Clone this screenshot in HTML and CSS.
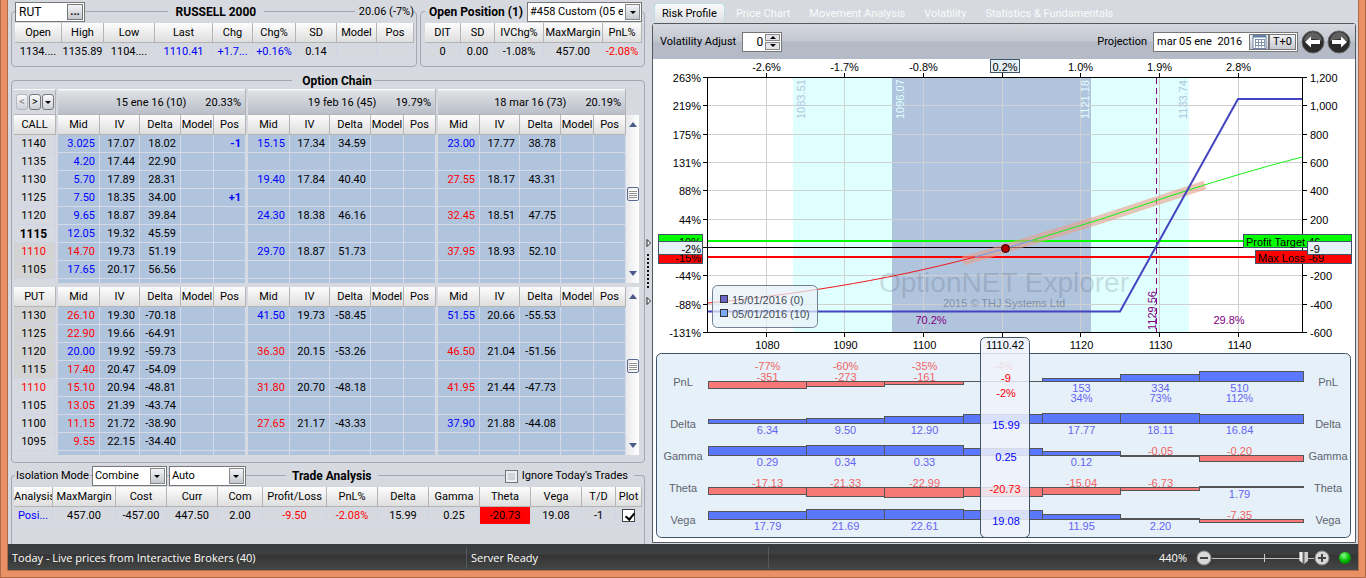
FILE: index.html
```html
<!DOCTYPE html>
<html lang="en">
<head>
<meta charset="utf-8">
<title>Option Chain and Risk Profile</title>
<link rel="stylesheet" href="styles.css">
</head>
<body>
<div class="frame">
<div class="window">
  <main class="workspace">
    <div class="left">
      <div class="top-row">
        <section class="group quote">
          <header class="group-head">
            <div class="field symbol"><input type="text" value="RUT" aria-label="Symbol"><button type="button" class="mini">...</button></div>
            <h2>RUSSELL 2000</h2>
            <span class="patch">20.06 (-7%)</span>
          </header>
          <table class="data">
            <colgroup><col class="w47"><col class="w42"><col class="w51"><col class="w58"><col class="w40"><col class="w43"><col class="w41"><col class="w40"><col class="w37"></colgroup>
            <thead><tr><th>Open</th><th>High</th><th>Low</th><th>Last</th><th>Chg</th><th>Chg%</th><th>SD</th><th>Model</th><th>Pos</th></tr></thead>
            <tbody><tr><td>1134....</td><td>1135.89</td><td>1104....</td><td class="up">1110.41</td><td class="up">+1.7...</td><td class="up">+0.16%</td><td>0.14</td><td></td><td></td></tr></tbody>
          </table>
        </section>
        <section class="group position">
          <header class="group-head">
            <h2>Open Position (1)</h2>
            <div class="combo trade"><select aria-label="Trade"><option>#458 Custom (05 e</option></select><span class="drop"></span></div>
          </header>
          <table class="data">
            <colgroup><col class="w36"><col class="w34"><col class="w49"><col class="w59"><col class="w39"></colgroup>
            <thead><tr><th>DIT</th><th>SD</th><th>IVChg%</th><th>MaxMargin</th><th>PnL%</th></tr></thead>
            <tbody><tr><td>0</td><td>0.00</td><td>-1.08%</td><td>457.00</td><td class="down">-2.08%</td></tr></tbody>
          </table>
        </section>
      </div>

      <section class="group chain">
        <header class="group-head low"><h2>Option Chain</h2></header>
        <div class="chain-part">
          <table class="data legs" id="calls">
            <thead>
              <tr class="band">
                <th class="nav"><div class="nav-buttons"><button type="button" disabled>&lt;</button><button type="button">&gt;</button><button type="button" aria-label="Menu"><span class="caret"></span></button></div></th>
                <td class="gap"></td>
                <th colspan="5"><div class="expiry"><span>15 ene 16 (10)</span><span>20.33%</span></div></th>
                <td class="gap"></td>
                <th colspan="5"><div class="expiry"><span>19 feb 16 (45)</span><span>19.79%</span></div></th>
                <td class="gap"></td>
                <th colspan="5"><div class="expiry"><span>18 mar 16 (73)</span><span>20.19%</span></div></th>
              </tr>
            </thead>
          </table>
          <div class="scroll under-band"><span class="arrow-up"></span><span class="thumb"></span><span class="arrow-down"></span></div>
        </div>
        <div class="chain-part">
          <table class="data legs" id="puts"><thead></thead></table>
          <div class="scroll"><span class="arrow-up"></span><span class="thumb"></span><span class="arrow-down"></span></div>
        </div>
      </section>

      <section class="group analysis">
        <header class="group-head">
          <label class="patch" for="isolation">Isolation Mode</label>
          <div class="combo iso"><select id="isolation"><option>Combine</option></select><span class="drop"></span></div>
          <div class="combo auto"><select aria-label="Grouping"><option>Auto</option></select><span class="drop"></span></div>
          <h2>Trade Analysis</h2>
          <label class="patch ignore"><input type="checkbox" class="box dim">Ignore Today's Trades</label>
        </header>
        <table class="data">
          <colgroup><col class="w39"><col class="w63"><col class="w51"><col class="w51"><col class="w45"><col class="w64"><col class="w51"><col class="w51"><col class="w51"><col class="w51"><col class="w51"><col class="w34"><col class="w26"></colgroup>
          <thead><tr><th>Analysis</th><th>MaxMargin</th><th>Cost</th><th>Curr</th><th>Com</th><th>Profit/Loss</th><th>PnL%</th><th>Delta</th><th>Gamma</th><th>Theta</th><th>Vega</th><th>T/D</th><th>Plot</th></tr></thead>
          <tbody><tr><td class="up">Posi...</td><td>457.00</td><td>-457.00</td><td>447.50</td><td>2.00</td><td class="down">-9.50</td><td class="down">-2.08%</td><td>15.99</td><td>0.25</td><td class="alert">-20.73</td><td>19.08</td><td>-1</td><td><input type="checkbox" class="box" checked aria-label="Plot position"></td></tr></tbody>
        </table>
      </section>
    </div>

    <div class="splitter">
      <svg width="5" height="68" viewBox="0 0 5 68" aria-hidden="true">
        <path d="M1 1.500V8.500L4.500 5Z M1 59.500V66.500L4.500 63Z" fill="#fff" stroke="#222"/>
        <path d="M2 16V52" stroke="#111" stroke-width="2" stroke-dasharray="2 2"/>
      </svg>
    </div>

    <div class="right">
      <nav class="tabs">
        <a href="#risk" class="active">Risk Profile</a><a href="#price">Price Chart</a><a href="#movement">Movement Analysis</a><a href="#volatility">Volatility</a><a href="#stats">Statistics &amp; Fundamentals</a>
      </nav>
      <div class="panel">
        <div class="toolbar">
          <label for="vol">Volatility Adjust</label>
          <div class="field spin"><input id="vol" type="text" value="0"><span class="spin-buttons"><button type="button" aria-label="Increase"><span class="caret flip"></span></button><button type="button" aria-label="Decrease"><span class="caret"></span></button></span></div>
          <label for="date" class="push">Projection</label>
          <div class="field date"><input id="date" type="text" value="mar 05 ene  2016"><button type="button" class="mini cal" aria-label="Calendar"><svg width="15" height="14" viewBox="0 0 15 14"><path d="M1 .5H14V13.500H1Z" fill="#fff" stroke="#6f86a8"/><path d="M1 1.500H14" stroke="#5d7cab" stroke-width="2"/><path d="M3 4.500H13M3 7.500H13M3 10.500H13M3.500 4V12.500M6.500 4V12.500M9.500 4V12.500M12.500 4V12.500" stroke="#8595ac"/></svg></button><button type="button" class="mini tzero">T+0</button></div>
          <button type="button" class="round" aria-label="Previous day"><svg width="24" height="24" viewBox="0 0 24 24"><circle cx="12" cy="12" r="11" fill="#2b2b2b" stroke="#666"/><path d="M3 11A9 9 0 0 1 21 11Q12 7 3 11Z" fill="#606060"/><path d="M4 12L10 6.500V10H19V14H10V17.500Z" fill="#fff"/></svg></button>
          <button type="button" class="round" aria-label="Next day"><svg width="24" height="24" viewBox="0 0 24 24"><circle cx="12" cy="12" r="11" fill="#2b2b2b" stroke="#666"/><path d="M3 11A9 9 0 0 1 21 11Q12 7 3 11Z" fill="#606060"/><path d="M20 12L14 6.500V10H5V14H14V17.500Z" fill="#fff"/></svg></button>
        </div>
        <svg class="chart" viewBox="653 59 702 483" role="img" aria-label="Risk profile chart">
          <rect x="793" y="78" width="396" height="254" fill="#e0ffff"/>
          <rect x="892" y="78" width="199" height="254" fill="#b0c4de"/>
          <path id="grid" stroke="#d0d0d0" fill="none"/>
          <g class="vertical">
            <text transform="translate(805 119) rotate(-90)" fill="#b0c4de">1083.51</text>
            <text transform="translate(904 119) rotate(-90)" fill="#e0ffff">1096.07</text>
            <text transform="translate(1089 119) rotate(-90)" fill="#e0ffff">1121.18</text>
            <text transform="translate(1187 119) rotate(-90)" fill="#b0c4de">1133.74</text>
            <text transform="translate(1156 330) rotate(-90)" fill="#800080">1129.56</text>
          </g>
          <g class="mid">
            <text x="1004" y="292" class="mark" fill="#405060" fill-opacity=".2">OptionNET Explorer</text>
            <text x="1004" y="307" fill="#303840" fill-opacity=".4">2015 © THJ Systems Ltd</text>
          </g>
          <path d="M1156.500 78V332" stroke="#800080" stroke-dasharray="6 4"/>
          <path d="M708 241H1302" stroke="#0f0" stroke-width="2"/>
          <path d="M708 257H1302" stroke="#f00" stroke-width="2"/>
          <path d="M708 247.500H1302" stroke="#000"/>
          <path d="M963 261Q985 255 1005 248.500L1100 219.500L1205 185" fill="none" stroke="#e8a088" stroke-opacity=".6" stroke-width="9"/>
          <path d="M708 303C790 295 880 282 975 257" fill="none" stroke="#f01818"/>
          <path d="M975 257L1005 248.500L1033 240" fill="none" stroke="#6a9af0"/>
          <path d="M1033 240L1100 219.500L1170 196Q1240 173 1302 157" fill="none" stroke="#18f018"/>
          <path d="M708 311.500H1120L1238 99H1302" fill="none" stroke="#4444c0" stroke-width="2"/>
          <circle cx="1005.500" cy="248.500" r="4" fill="#b00000" stroke="#200"/>
          <path id="axes" stroke="#000" fill="none"/>
          <g id="left-scale" class="end"></g>
          <g id="right-scale"></g>
          <g id="top-scale" class="mid"></g>
          <g id="bottom-scale" class="mid"></g>
          <g class="mid" fill="#800080"><text x="931" y="324">70.2%</text><text x="1229" y="324">29.8%</text></g>

          <g stroke="#405468">
            <rect x="658.500" y="234.500" width="44" height="13" fill="#0f0"/>
            <rect x="658.500" y="250.500" width="44" height="13" fill="#f00"/>
            <rect x="1243.500" y="234.500" width="108" height="13" fill="#0f0"/>
            <rect x="1255.500" y="250.500" width="96" height="13" fill="#f00"/>
            <rect x="990.500" y="59.500" width="29" height="13" fill="#e6f0f8"/>
          </g>
          <text class="end" x="701" y="246">10%</text><text class="end" x="701" y="262">-15%</text>
          <text x="1246" y="246">Profit Target 46</text><text x="1258" y="262">Max Loss -69</text>
          <g fill="#e6f0f8" stroke="#405468"><rect x="658.500" y="241.500" width="44" height="13"/><rect x="1307.500" y="241.500" width="44" height="13"/></g>
          <text class="end" x="701" y="253">-2%</text><text x="1310" y="253">-9</text><text class="mid" x="1005" y="71">0.2%</text>

          <rect x="712.500" y="285.500" width="105" height="42" rx="5" fill="#e8f1f8" fill-opacity=".72" stroke="#708090"/>
          <rect x="720.500" y="295.500" width="7" height="7" fill="#6c66c8" stroke="#333"/>
          <rect x="720.500" y="309.500" width="7" height="7" fill="#7ca8f8" stroke="#333"/>
          <text x="732" y="304" fill="#444c58">15/01/2016 (0)</text><text x="732" y="318" fill="#444c58">05/01/2016 (10)</text>

          <rect x="656.500" y="353.500" width="694" height="184" rx="5" fill="#e6f0f8" stroke="#405468"/>
          <g id="bars" stroke="#555"></g>
          <g id="values" class="mid"></g>
          <rect x="980.500" y="337.500" width="49" height="200" rx="5" fill="#eef2fc" fill-opacity=".85" stroke="#405468"/>
          <path d="M982 353.500H1028M982 381.500H1028" stroke="#cfd8e4"/>
          <g class="mid">
            <text x="1005" y="349">1110.42</text>
            <g fill="#f00"><text x="1006" y="382">-9</text><text x="1006" y="397">-2%</text><text x="1005" y="493">-20.73</text></g>
            <g fill="#00f"><text x="1006" y="429">15.99</text><text x="1006" y="461">0.25</text><text x="1006" y="525">19.08</text></g>
          </g>
        </svg>
      </div>
    </div>
  </main>

  <footer class="status">
    <span class="cell feed">Today - Live prices from Interactive Brokers (40)</span>
    <span class="cell server">Server Ready</span>
    <span class="cell rest"></span>
    <label for="zoom">440%</label>
    <button type="button" class="knob" aria-label="Zoom out"><svg width="16" height="16" viewBox="0 0 16 16"><circle cx="8" cy="8" r="7" fill="#d8d8d8" stroke="#888"/><path d="M4 8H12" stroke="#444" stroke-width="2"/></svg></button>
    <input id="zoom" class="slider" type="range" min="0" max="100" value="94">
    <button type="button" class="knob" aria-label="Zoom in"><svg width="16" height="16" viewBox="0 0 16 16"><circle cx="8" cy="8" r="7" fill="#d8d8d8" stroke="#888"/><path d="M4 8H12M8 4V12" stroke="#444" stroke-width="2"/></svg></button>
    <span class="led"></span>
  </footer>
</div>
</div>
<script src="app.js"></script>
</body>
</html>
```
FILE: styles.css
```css
* { box-sizing: border-box; }
body { margin: 0; font: 11px/14px Roboto, "Liberation Sans", sans-serif; color: #000; }
button, input, select { font: inherit; color: inherit; }
button { padding: 0; }
h2 { margin: 0; font-size: 12px; line-height: 16px; font-weight: 700; }

.frame { min-height: 100vh; padding: 0 8px 8px; display: flex; background: #e99064; box-shadow: inset 1px 0 #b06c4a, inset -1px 0 #b06c4a, inset 0 -1px #b06c4a; }
.window { flex: 1; min-width: 0; display: flex; flex-direction: column; background: #d6d9df; outline: 1px solid #b06c4a; }
.workspace { flex: 1; display: grid; grid-template-columns: 637px 7px minmax(0, 1fr); }
.left { display: flex; flex-direction: column; padding-left: 3px; }
.top-row { display: flex; gap: 3px; margin-top: 11px; }

/* Group boxes: the header row sits across the top border */
.group { border: 1px solid #a3a8b3; border-radius: 4px; padding: 0 2px; }
.group-head { display: flex; align-items: center; justify-content: space-between; height: 20px; margin: -10px 0 1px; }
.group-head h2, .patch { background: #d6d9df; padding: 0 4px; white-space: nowrap; }
.quote { flex: none; width: 406px; padding: 0 2px 5px 3px; }
.quote h2 { padding: 0 8px; margin-right: 8px; }
.quote .patch { padding: 0 0 0 4px; }
.position { flex: 1; min-width: 0; padding: 0 2px 5px 4px; }
.chain { margin-top: 13px; padding-bottom: 7px; }
.low { height: 16px; margin: -8px 0 0; justify-content: center; }
.low h2 { margin-left: 10px; padding: 0 2px 0 10px; }
.analysis { margin-top: 12px; flex: 1; border-bottom: 0; border-radius: 4px 4px 0 0; }
.analysis .patch { padding: 0 1px; }
.analysis .group-head { gap: 2px; padding: 0 8px 0 1px; }
.analysis h2 { margin-right: auto; margin-left: 38px; padding: 0 6px; }
.analysis .ignore { display: flex; align-items: center; gap: 4px; padding: 0 6px 0 0; }

.field { display: flex; background: #fff; border: 1px solid #777; height: 20px; padding: 1px; }
.field input { flex: 1; min-width: 0; width: 0; border: 0; padding: 0 2px; background: none; font-size: 12px; outline: 0; }
.symbol { width: 70px; }
.mini { width: 16px; border: 1px solid #777; background: linear-gradient(#f4f4f6, #c4c8d0); font-weight: 700; line-height: 10px; }
.combo { display: grid; height: 20px; background: #fff; border: 1px solid #777; }
.combo select, .drop { grid-area: 1 / 1; }
.combo select { appearance: none; border: 0; background: none; padding: 0 18px 0 2px; outline: 0; width: 100%; }
.drop { justify-self: end; width: 15px; margin: 1px; border: 1px solid #888; background: linear-gradient(#f4f4f6, #c4c8d0); pointer-events: none; display: flex; align-items: center; justify-content: center; }
.drop::after, .caret { content: ""; border: 3px solid transparent; border-top-color: #000; border-bottom: 0; }
.caret { display: block; }
.flip { transform: rotate(180deg); }
.trade { width: 117px; }
.iso { width: 75px; }
.auto { width: 77px; }

.data { table-layout: fixed; border-collapse: separate; border-spacing: 0; width: min-content; }
.data th { height: 20px; padding: 0; font-weight: 400; overflow: hidden; white-space: nowrap; text-align: center; background: linear-gradient(#fdfdfd, #ededed 50%, #dedede); border-right: 1px solid #b4b4b4; border-bottom: 1px solid #b4b4b4; }
.data td { height: 18px; padding: 0; overflow: hidden; white-space: nowrap; text-align: center; border-right: 1px solid #cfd5e4; border-bottom: 1px solid #cfd5e4; }
.group > .data { width: 100%; }
.data .up { color: #00f; }
.data .down { color: #f00; }
.data .alert { background: #f00; }
.data .box { display: grid; margin: 0 auto; }
.w26 { width: 26px; } .w32 { width: 32px; } .w33 { width: 33px; } .w34 { width: 34px; } .w36 { width: 36px; } .w37 { width: 37px; } .w39 { width: 39px; }
.w40 { width: 40px; } .w41 { width: 41px; } .w42 { width: 42px; } .w43 { width: 43px; } .w45 { width: 45px; } .w47 { width: 47px; } .w49 { width: 49px; }
.w51 { width: 51px; } .w58 { width: 58px; } .w59 { width: 59px; } .w63 { width: 63px; } .w64 { width: 64px; } .w2 { width: 2px; }

.chain-part { display: flex; }
.chain-part + .chain-part { margin-top: 4px; }
.legs { width: 612px; flex: none; }
.data.legs td { background: #b0c4de; text-align: right; padding-right: 4px; border-color: #d4dae8; }
.data.legs td.gap { background: none; border: 0; padding: 0; }
.data.legs td.strike { background: none; text-align: center; padding: 0 2px 0 0; border-color: #cfd5e4; }
.data.legs td.itm { background: #d3d3d3; }
.data.legs td.atm { font-weight: 700; font-size: 12px; }
.data.legs td.pos { font-weight: 700; }
.data.legs .cut td { height: 4px; border-bottom: 0; }
.data .band th { height: 26px; background: linear-gradient(#fafafa 1px, #dfe1e5 2px, #b9bec8); }
.data .band .nav { background: #d6d9df; border-top: 1px solid #fafafa; }
.expiry { display: flex; justify-content: flex-end; gap: 19px; padding: 2px 4px 0 0; }
.nav-buttons { display: flex; gap: 1px; padding-left: 2px; }
.nav-buttons button { width: 12px; height: 16px; border: 1px solid #777; border-radius: 3px; background: linear-gradient(#fafafa, #ccd0d8); display: flex; align-items: center; justify-content: center; }
.nav-buttons button:disabled { border-color: #b4b8c0; color: #888; }

.scroll { width: 13px; display: flex; flex-direction: column; align-items: center; justify-content: space-between; padding: 7px 0; background: linear-gradient(90deg, #e8e8ec, #fff); }
.under-band { margin-top: 26px; }
.arrow-up { border: 4px solid transparent; border-top: 0; border-bottom: 5px solid #4a5a8c; }
.arrow-down { border: 4px solid transparent; border-bottom: 0; border-top: 5px solid #4a5a8c; }
.thumb { width: 12px; height: 14px; border: 1px solid #5a6c90; border-radius: 2px; background: repeating-linear-gradient(#fff 0 1px, #909090 1px 2px); background-clip: content-box; padding: 2px 1px; background-color: #f4f4f4; margin-top: -10px; }

.box { appearance: none; width: 13px; height: 13px; margin: 0; background: #fff; border: 1px solid #444; }
.box:checked::after { content: ""; display: block; width: 4px; height: 7px; margin: 1px 0 0 4px; border: solid #000; border-width: 0 2px 2px 0; transform: rotate(40deg); }
.dim { border-color: #777; background: #cfd3da; box-shadow: inset 0 0 0 2px #eceef2; }

.splitter { display: flex; align-items: center; justify-content: center; }

.right { display: flex; flex-direction: column; padding: 0 2px 1px 0; min-width: 0; }
.tabs { display: flex; gap: 1px; height: 23px; padding: 3px 0 0 2px; line-height: 20px; }
.tabs a { padding: 0 8px; color: #fbfbfb; text-decoration: none; white-space: nowrap; border: 1px solid transparent; border-bottom: 0; }
.tabs .active { color: #000; padding: 0 7px; margin: 0 1px -1px 0; background: linear-gradient(#fafafa, #d9dce1); border-color: #b8e0e4; border-radius: 4px 4px 0 0; }
.panel { flex: 1; background: #fff; border: 1px solid #55585e; border-radius: 3px 3px 0 0; }
.toolbar { display: flex; align-items: center; height: 35px; padding: 0 4px 0 7px; background: linear-gradient(#d6d9df, #c3c7d0 17px, #b4bac6 18px); }
.push { margin-left: auto; }
.spin { width: 40px; margin-left: 6px; }
.spin input { text-align: right; }
.spin-buttons { width: 15px; display: grid; gap: 1px; }
.spin-buttons button { border: 1px solid #888; background: #e4e4e8; display: flex; align-items: center; justify-content: center; min-height: 0; }
.date { width: 145px; margin: 0 1px 0 6px; }
.date input { font-size: 11px; white-space: pre; }
.cal { width: 20px; display: flex; align-items: center; justify-content: center; }
.tzero { width: 27px; font-weight: 400; }
.round { border: 0; background: none; width: 24px; height: 24px; margin-left: 2px; }
.round svg, .knob svg { display: block; }

.chart { display: block; width: 100%; font: 11px "Liberation Sans", Arial, sans-serif; }
.chart .mid { text-anchor: middle; }
.chart .end { text-anchor: end; }
.chart .mark { font-size: 28px; }

.status { display: flex; align-items: center; height: 26px; padding: 2px 7px 0 0; color: #fff; font: 11px/16px "Open Sans", "Noto Sans", sans-serif; background: linear-gradient(#3a3b3e, #3e3f43 10px, #333433 11px, #454646); }
.cell { height: 22px; line-height: 22px; border-right: 1px solid #55575a; padding-left: 4px; white-space: nowrap; }
.feed { width: 459px; }
.server { width: 302px; }
.rest { flex: 1; border: 0; }
.knob { border: 0; background: none; margin-left: 9px; width: 16px; height: 16px; }
.slider { appearance: none; width: 102px; height: 16px; margin: 0 -9px 0 0; background: linear-gradient(#ccc, #ccc) 52px 4px / 1px 8px no-repeat, linear-gradient(#bbb, #bbb) 0 8px / 100% 1px no-repeat; }
.slider::-webkit-slider-thumb { appearance: none; width: 9px; height: 13px; background: linear-gradient(90deg, #eee 3px, #666 4px 5px, #ccc 6px); clip-path: polygon(0 0, 100% 0, 100% 70%, 50% 100%, 0 70%); }
.led { width: 12px; height: 12px; margin-left: 9px; border-radius: 50%; background: radial-gradient(circle at 40% 30%, #8f8, #0b0 50%, #050); }
```
FILE: app.js
```js
const calls = [
  ["1140", "", ["+3.025", "17.07", "18.02", "-1"], ["+15.15", "17.34", "34.59"], ["+23.00", "17.77", "38.78"]],
  ["1135", "", ["+4.20", "17.44", "22.90"], [], []],
  ["1130", "", ["+5.70", "17.89", "28.31"], ["+19.40", "17.84", "40.40"], ["-27.55", "18.17", "43.31"]],
  ["1125", "", ["+7.50", "18.35", "34.00", "+1"], [], []],
  ["1120", "", ["+9.65", "18.87", "39.84"], ["+24.30", "18.38", "46.16"], ["-32.45", "18.51", "47.75"]],
  ["1115", "atm", ["+12.05", "19.32", "45.59"], [], []],
  ["1110", "itm down", ["-14.70", "19.73", "51.19"], ["+29.70", "18.87", "51.73"], ["-37.95", "18.93", "52.10"]],
  ["1105", "itm", ["+17.65", "20.17", "56.56"], [], []]
];
const puts = [
  ["1130", "itm", ["-26.10", "19.30", "-70.18"], ["+41.50", "19.73", "-58.45"], ["+51.55", "20.66", "-55.53"]],
  ["1125", "itm", ["-22.90", "19.66", "-64.91"], [], []],
  ["1120", "itm", ["+20.00", "19.92", "-59.73"], ["-36.30", "20.15", "-53.26"], ["-46.50", "21.04", "-51.56"]],
  ["1115", "itm", ["-17.40", "20.47", "-54.09"], [], []],
  ["1110", "down", ["-15.10", "20.94", "-48.81"], ["-31.80", "20.70", "-48.18"], ["-41.95", "21.44", "-47.73"]],
  ["1105", "", ["-13.05", "21.39", "-43.74"], [], []],
  ["1100", "", ["-11.15", "21.72", "-38.90"], ["-27.65", "21.17", "-43.33"], ["+37.90", "21.88", "-44.08"]],
  ["1095", "", ["-9.55", "22.15", "-34.40"], [], []]
];

// The sign in front of a Mid price is its direction and picks the colour.
function legCells([mid = "", iv = "", delta = "", pos = ""]) {
  return `<td class="gap"></td><td class="${mid[0] === "-" ? "down" : "up"}">${mid.slice(1)}</td><td>${iv}</td><td>${delta}</td><td></td><td class="pos up">${pos}</td>`;
}

function fillChain(id, title, rows) {
  const table = document.getElementById(id);
  const leg = '<col class="w2"><col class="w42"><col class="w40"><col class="w41"><col class="w33"><col class="w32">';
  const head = '<td class="gap"></td><th>Mid</th><th>IV</th><th>Delta</th><th>Model</th><th>Pos</th>';
  table.insertAdjacentHTML("afterbegin", `<colgroup><col class="w42">${leg.repeat(3)}</colgroup>`);
  table.tHead.insertAdjacentHTML("beforeend", `<tr><th>${title}</th>${head.repeat(3)}</tr>`);
  const body = rows.map(([strike, kind, ...legs]) => `<tr><td class="strike ${kind}">${strike}</td>${legs.map(legCells).join("")}</tr>`);
  body.push(`<tr class="cut"><td class="strike"></td>${legCells([]).repeat(3)}</tr>`);
  table.insertAdjacentHTML("beforeend", `<tbody>${body.join("")}</tbody>`);
}
fillChain("calls", "CALL", calls);
fillChain("puts", "PUT", puts);

// Chart scales
const xs = [766, 844, 923, 1002, 1080, 1159, 1238].map(x => x + .5);
const ys = [77, 105, 134, 162, 190, 219, 247, 275, 304, 332].map(y => y + .5);
const byId = id => document.getElementById(id);
byId("grid").setAttribute("d", xs.map(x => `M${x} 78V332`).join("") + ys.slice(1, -1).map(y => `M708 ${y}H1302`).join(""));
byId("axes").setAttribute("d", "M707.5 77.5H1302.5V332.5H707.5Z" +
  xs.map(x => `M${x} 73V78M${x} 332V337`).join("") + ys.map(y => `M703 ${y}H708M1302 ${y}H1307`).join(""));
const text = (x, y, s, fill) => s === "" ? "" : `<text x="${x}" y="${y}"${fill ? ` fill="${fill}"` : ""}>${s}</text>`;
byId("left-scale").innerHTML = ["263%", "219%", "175%", "131%", "88%", "44%", "", "-44%", "-88%", "-131%"].map((s, i) => text(701, ys[i] + 4, s)).join("");
byId("right-scale").innerHTML = ["1,200", "1,000", "800", "600", "400", "200", "", "-200", "-400", "-600"].map((s, i) => text(1310, ys[i] + 4, s)).join("");
byId("top-scale").innerHTML = ["-2.6%", "-1.7%", "-0.8%", "", "1.0%", "1.9%", "2.8%"].map((s, i) => text(xs[i], 71, s)).join("");
byId("bottom-scale").innerHTML = ["1080", "1090", "1100", "", "1120", "1130", "1140"].map((s, i) => text(xs[i] + 1, 349, s)).join("");

// Greeks: a step bar per price interval, above (+) or below (-) its base line
const edges = [708.5, 806.5, 884.5, 963.5, 1042.5, 1120.5, 1199.5, 1303.5];
const greeks = [
  ["PnL", 381.5, [-7, -5, -3, 0, 3, 7, 10], ["-351", "-273", "-161", "", "153", "334", "510"]],
  ["Delta", 423.5, [4, 5, 7, 9, 10, 10, 9], ["6.34", "9.50", "12.90", "", "17.77", "18.11", "16.84"]],
  ["Gamma", 455.5, [9, 10, 10, 7, 4, -1, -6], ["0.29", "0.34", "0.33", "", "0.12", "-0.05", "-0.20"]],
  ["Theta", 487.5, [-7, -9, -10, -9, -7, -3, 1], ["-17.13", "-21.33", "-22.99", "", "-15.04", "-6.73", "1.79"]],
  ["Vega", 519.5, [8, 10, 10, 9, 5, 1, -3], ["17.79", "21.69", "22.61", "", "11.95", "2.20", "-7.35"]]
];
const percents = ["-77%", "-60%", "-35%", "-4%", "34%", "73%", "112%"];
let bars = "", values = "";
for (const [name, base, heights, labels] of greeks) {
  heights.forEach((h, i) => {
    bars += `<rect x="${edges[i]}" y="${h > 0 ? base - h : base}" width="${edges[i + 1] - edges[i]}" height="${Math.abs(h)}" fill="${h > 0 ? "#5a78ff" : "#f87878"}"/>`;
    values += text(xs[i] + 1, h > 0 ? base + 10.5 : base - .5, labels[i], h > 0 ? "#6464f4" : "#f06464");
  });
  const labelY = name === "PnL" ? 386 : base + 4.5;
  values += text(683, labelY, name, "#5c6470") + text(1328, labelY, name, "#5c6470");
}
bars += '<path d="M963.5 381.5H1042.5"/>';
percents.forEach((s, i) => { values += text(xs[i] + 1, i > 3 ? 402 : 370, s, i > 3 ? "#6464f4" : "#f06464"); });
byId("bars").innerHTML = bars;
byId("values").innerHTML = values;
```
